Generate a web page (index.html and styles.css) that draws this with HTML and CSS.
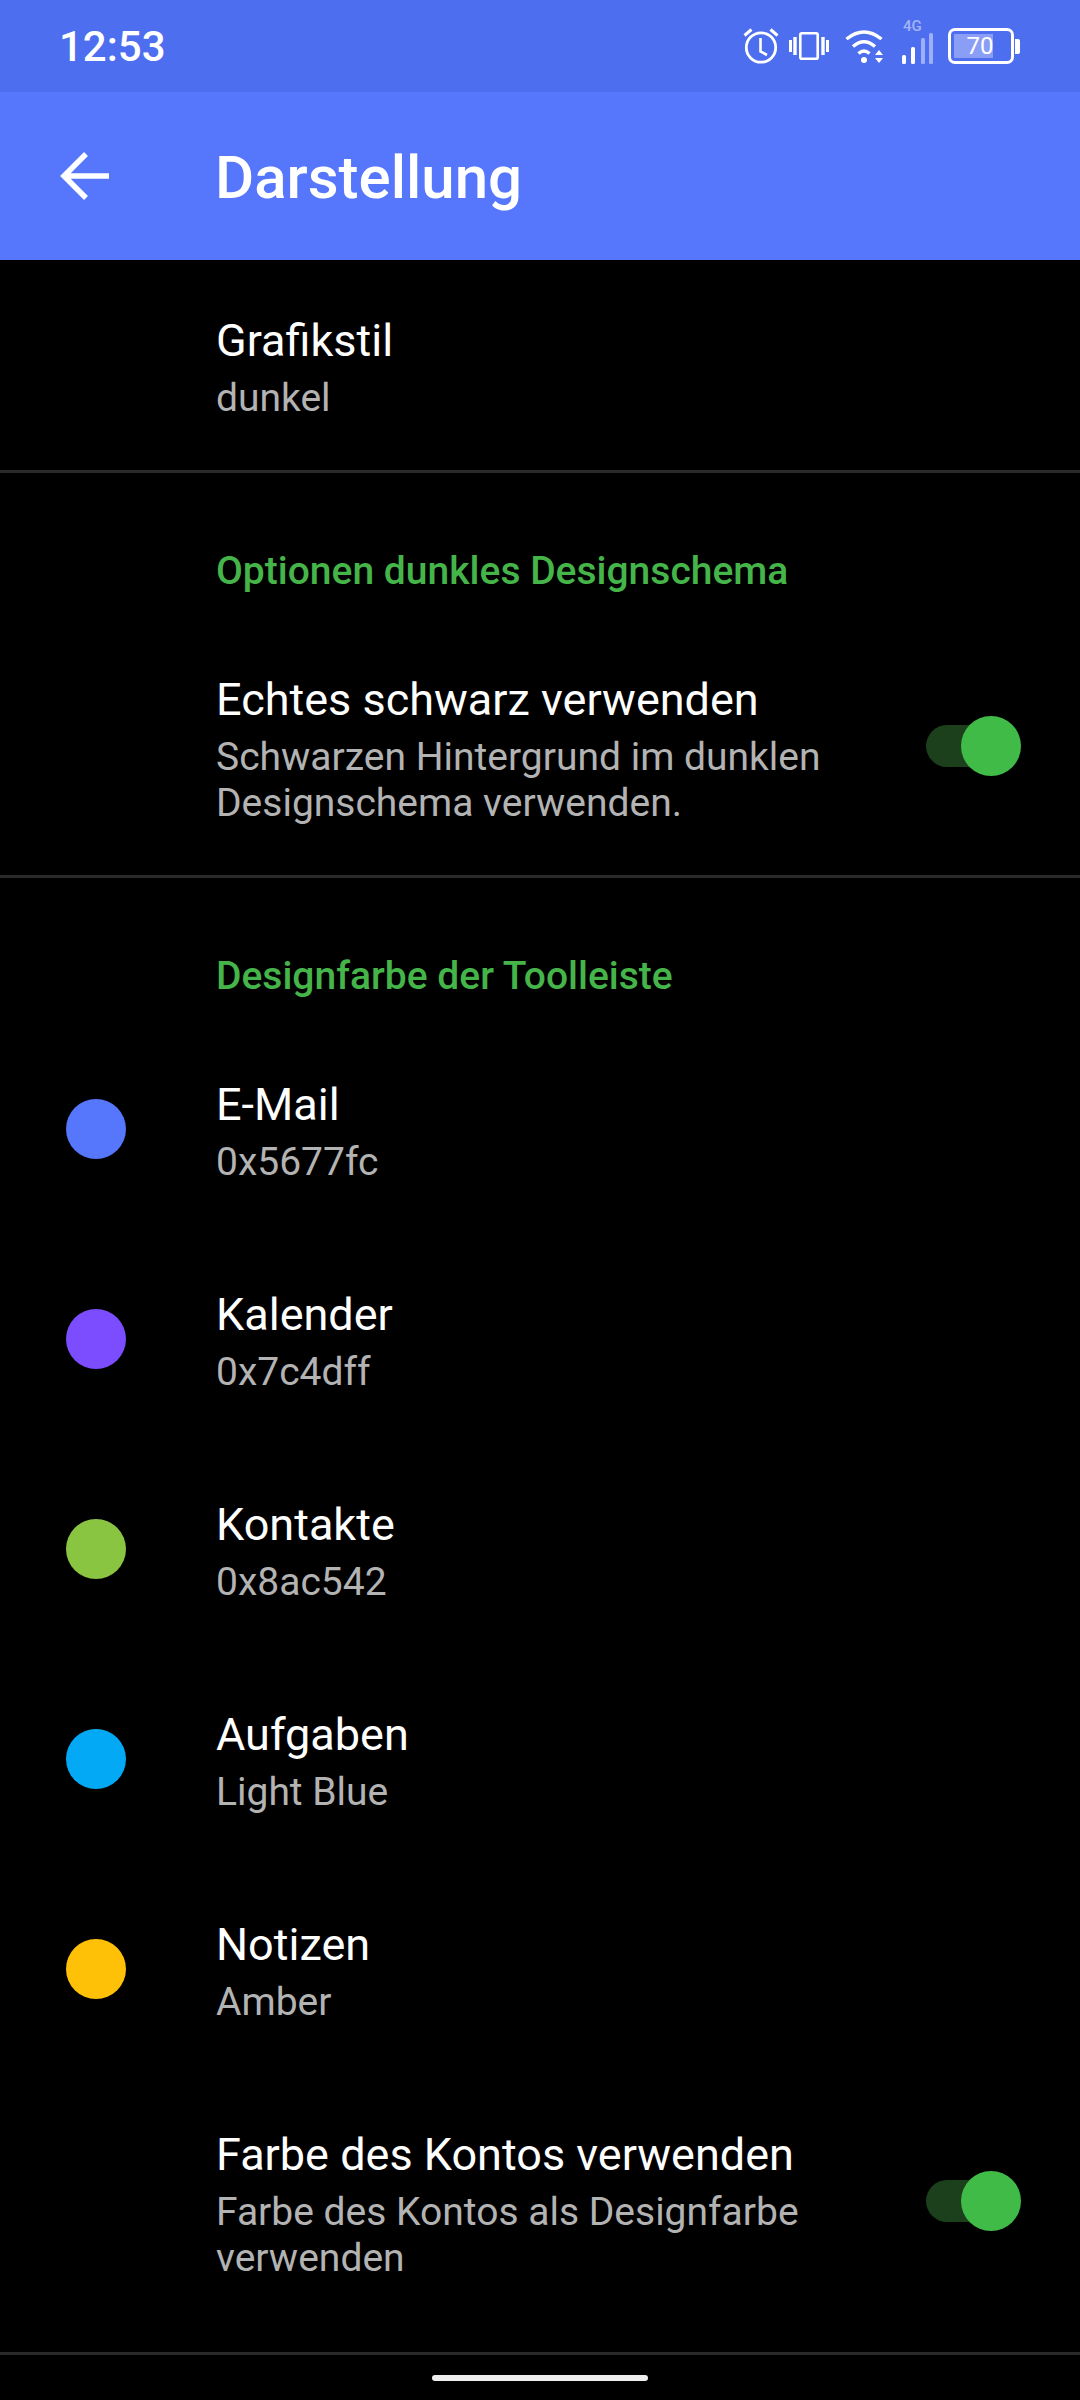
FILE: index.html
```html
<!doctype html>
<html lang="de">
<head>
<meta charset="utf-8">
<title>Darstellung</title>
<link rel="stylesheet" href="styles.css">
</head>
<body>

<div class="status">
	<span class="clock">12:53</span>
	<div class="status-icons">
		<!-- alarm -->
		<svg class="ic ic-alarm" width="36" height="36" viewBox="0 0 36 36" fill="none" stroke="#fff">
			<circle cx="18" cy="19.500" r="14.700" stroke-width="2.800"/>
			<path d="M17.500 10v13.500l6.500 3.500" stroke-width="2.600"/>
			<path d="M1.500 7.500 8.500 1.500M34.500 7.500 27.500 1.500" stroke-width="3"/>
		</svg>
		<!-- vibrate -->
		<svg class="ic ic-vibrate" width="40" height="28" viewBox="0 0 40 28" fill="none" stroke="#fff">
			<rect x="11.300" y="1.300" width="17.400" height="25.400" rx="1.500" stroke-width="2.600"/>
			<path d="M6 5v18M34 5v18" stroke-width="3.400"/>
			<path d="M1.500 8v12M38.500 8v12" stroke-width="3"/>
		</svg>
		<!-- wifi -->
		<svg class="ic ic-wifi" width="38" height="33" viewBox="0 0 38 33" fill="none" stroke="#fff" stroke-width="3.400">
			<path d="M1.500 9Q19-5 36.500 9"/>
			<path d="M8 16.500Q19 7 30 16.500"/>
			<path d="M13.500 23.500Q19 18.500 24.500 23.500"/>
			<circle cx="19" cy="30" r="3" fill="#fff" stroke="none"/>
			<path d="M34 20l4 5h-8zM34 33l-4-5h8z" fill="#fff" stroke="none"/>
		</svg>
		<!-- signal -->
		<div class="signal">
			<span class="net">4G</span>
			<svg class="ic" width="31" height="31" viewBox="0 0 31 31">
				<rect x="0" y="22" width="4" height="9" rx="1.500" fill="#fff"/>
				<rect x="9" y="14" width="4" height="17" rx="1.500" fill="#fff"/>
				<rect x="19" y="5" width="4" height="26" rx="1.500" fill="#fff" opacity=".45"/>
				<rect x="27" y="0" width="4" height="31" rx="1.500" fill="#fff" opacity=".45"/>
			</svg>
		</div>
		<!-- battery -->
		<div class="battery">
			<div class="cell">
				<div class="level" style="width: 72%"></div>
				<span class="pct">70</span>
			</div>
			<div class="cap"></div>
		</div>
	</div>
</div>

<div class="toolbar">
	<svg class="back" width="50" height="50" viewBox="0 0 50 50" fill="none" stroke="#fff" stroke-width="5.500">
		<path d="M49 25H4M26 3 4 25l22 22"/>
	</svg>
	<span class="title">Darstellung</span>
</div>

<div class="row row-single">
	<div class="slot"></div>
	<div class="text">
		<div class="name">Grafikstil</div>
		<div class="sub">dunkel</div>
	</div>
</div>
<div class="rule"></div>

<div class="section">Optionen dunkles Designschema</div>
<div class="row row-switch">
	<div class="slot"></div>
	<div class="text text-wrap">
		<div class="name">Echtes schwarz verwenden</div>
		<div class="sub">Schwarzen Hintergrund im dunklen Designschema verwenden.</div>
	</div>
	<div class="switch"><div class="knob"></div></div>
</div>
<div class="rule"></div>

<div class="section">Designfarbe der Toolleiste</div>
<div class="row row-single">
	<div class="slot"><div class="dot dot-mail"></div></div>
	<div class="text">
		<div class="name">E-Mail</div>
		<div class="sub">0x5677fc</div>
	</div>
</div>
<div class="row row-single">
	<div class="slot"><div class="dot dot-cal"></div></div>
	<div class="text">
		<div class="name">Kalender</div>
		<div class="sub">0x7c4dff</div>
	</div>
</div>
<div class="row row-single">
	<div class="slot"><div class="dot dot-contacts"></div></div>
	<div class="text">
		<div class="name">Kontakte</div>
		<div class="sub">0x8ac542</div>
	</div>
</div>
<div class="row row-single">
	<div class="slot"><div class="dot dot-tasks"></div></div>
	<div class="text">
		<div class="name">Aufgaben</div>
		<div class="sub">Light Blue</div>
	</div>
</div>
<div class="row row-single">
	<div class="slot"><div class="dot dot-notes"></div></div>
	<div class="text">
		<div class="name">Notizen</div>
		<div class="sub">Amber</div>
	</div>
</div>
<div class="row row-switch row-last">
	<div class="slot"></div>
	<div class="text text-wrap">
		<div class="name">Farbe des Kontos verwenden</div>
		<div class="sub">Farbe des Kontos als Designfarbe verwenden</div>
	</div>
	<div class="switch"><div class="knob"></div></div>
</div>
<div class="rule"></div>

<div class="home-bar"><div class="pill"></div></div>

</body>
</html>
```

FILE: styles.css
```css
html, body {
	margin: 0;
	background: #000;
}
body {
	width: 1080px;
	height: 2400px;
	overflow: hidden;
	font-family: Roboto, "Liberation Sans", sans-serif;
	color: #fff;
}

.status {
	height: 92px;
	background: #4e6ef0;
	display: flex;
	align-items: center;
	justify-content: space-between;
	padding: 0 60px 0 59px;
}
.clock {
	font-size: 42px;
	font-weight: 500;
}
.status-icons {
	display: flex;
	align-items: center;
}
.ic { display: block; }
.ic-vibrate { margin-left: 10px; }
.ic-wifi { margin-left: 16px; }
.signal {
	position: relative;
	width: 31px;
	height: 31px;
	margin-left: 19px;
	margin-top: 5px;
}
.net {
	position: absolute;
	top: -14px;
	left: 1px;
	font-size: 15px;
	line-height: 15px;
	font-weight: 500;
	color: #a3b3f7;
}
.battery {
	display: flex;
	align-items: center;
	margin-left: 15px;
}
.cell {
	position: relative;
	box-sizing: border-box;
	width: 66px;
	height: 36px;
	border: 3px solid #fff;
	border-radius: 7px;
	padding: 3px;
	display: flex;
}
.level {
	background: #8a9ef6;
	height: 100%;
}
.pct {
	position: absolute;
	top: 0;
	left: 0;
	right: 2px;
	bottom: 0;
	display: flex;
	align-items: center;
	justify-content: center;
	font-size: 24px;
	color: #fff;
}
.cap {
	width: 5px;
	height: 15px;
	background: #fff;
	border-radius: 0 2px 2px 0;
	margin-left: 1px;
}

.toolbar {
	height: 168px;
	background: #5677fc;
	display: flex;
	align-items: center;
}
.back {
	margin-left: 60px;
	margin-right: 105px;
	display: block;
}
.title {
	font-size: 60px;
	font-weight: 500;
	padding-top: 2px;
}

.row {
	display: flex;
}
.row-single {
	height: 210px;
	align-items: center;
}
.row-switch { padding: 49px 0; }
.row-last { padding-bottom: 71px; }
.slot {
	width: 216px;
	flex: none;
	padding-left: 66px;
	box-sizing: border-box;
}
.text {
	flex: 1;
	padding-top: 3px;
}
.text-wrap {
	max-width: 640px;
	flex: none;
}
.name {
	font-size: 45px;
	line-height: 58px;
}
.sub {
	font-size: 39px;
	line-height: 46px;
	color: #b3b3b3;
	margin-top: 5px;
}

.dot {
	width: 60px;
	height: 60px;
	border-radius: 50%;
}
.dot-mail { background: #5677fc; }
.dot-cal { background: #7c4dff; }
.dot-contacts { background: #8ac542; }
.dot-tasks { background: #03a9f4; }
.dot-notes { background: #ffc107; }

.switch {
	position: relative;
	align-self: center;
	margin: 0 60px 2px auto;
	width: 94px;
	height: 42px;
	border-radius: 21px;
	background: #1b401b;
}
.knob {
	position: absolute;
	top: -9px;
	right: -1px;
	width: 60px;
	height: 60px;
	border-radius: 50%;
	background: #41bb47;
}

.rule {
	height: 3px;
	background: #2a2a2a;
}
.section {
	height: 146px;
	box-sizing: border-box;
	padding: 75px 0 0 216px;
	font-size: 39px;
	line-height: 46px;
	font-weight: 500;
	color: #45b54a;
}

.home-bar {
	display: flex;
	justify-content: center;
	padding-top: 20px;
}
.pill {
	width: 216px;
	height: 6px;
	border-radius: 3px;
	background: #eee;
}
```
